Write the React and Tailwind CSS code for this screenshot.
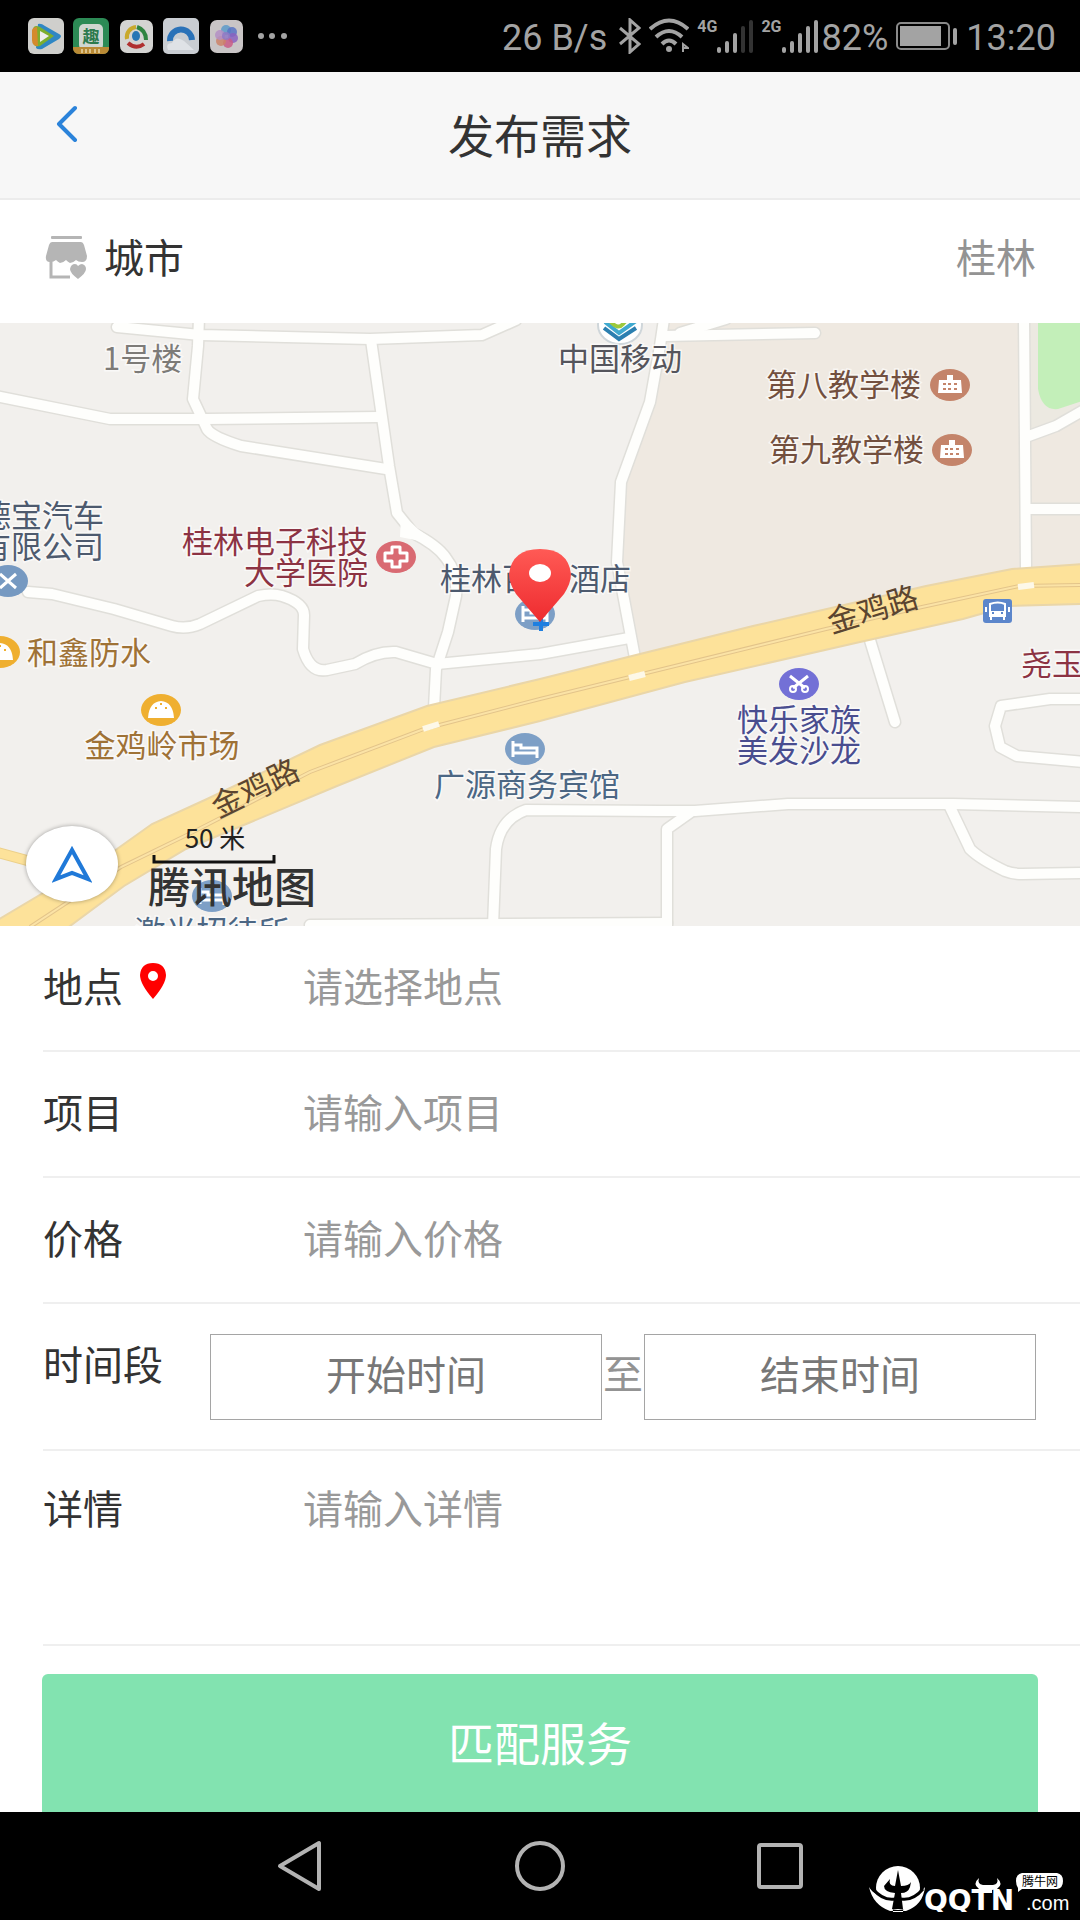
const ROADS = [
  'M117 4 L200 12 L370 16 L482 12 L516 -3',
  'M199 -6 L198 23 L193 76 L207 106 Q212 114 241 123 L386 146',
  'M-4 73 L110 96 L206 96 L379 94',
  'M371 17 L389 143 L397 190 L413 210 Q437 222 446 235 Q458 250 456 273 L448 309 L436 346 L434 385',
  'M28 269 L52 271 L114 286 L172 303 Q186 307 200 301 L258 273 Q272 270 282 273 Q304 280 304 292 L303 326 Q310 350 327 347 L355 341 Q376 328 396 329 L437 341 L540 331 L629 315',
  'M664 -4 L660 23 L650 79 L621 159 L617 239 L635 335',
  'M664 13 L815 10',
  'M680 10 L726 -4',
  'M1024 -4 L1026 246',
  'M1026 114 L1056 103 L1084 87',
  'M1026 186 L1084 186',
  'M493 603 L496 526 Q500 496 526 487 L660 488 L695 488 L788 481 L953 481 L1084 484',
  'M691 489 L667 506 L667 606',
  'M310 602 L667 600',
  'M950 484 L970 526 Q980 536 1005 548 Q1012 551 1022 551 L1084 550',
  'M869 314 L895 399',
  'M1084 376 L1050 376 L1001 383 L995 403 L1000 424 L1017 433 L1084 439',
]

const HIGHWAY =
  'M-4 598 L117 526 L152 501 L207 476 L320 422 L427 383 L540 356 L640 331 L753 303 L926 263 L1012 246 L1084 241 V281 L1009 283 L963 296 L860 319 L685 359 L540 398 L434 424 L337 463 L251 499 L186 526 L124 563 L66 606 L-4 606 Z'

const LABELS = [
  { text: '1号楼', x: 103, y: 47, color: '#7d7b78' },
  { text: '中国移动', x: 558, y: 47, color: '#55555c' },
  { text: '第八教学楼', x: 766, y: 73, color: '#73503f' },
  { text: '第九教学楼', x: 769, y: 138, color: '#73503f' },
  { text: '德宝汽车', x: 104, y: 204, color: '#4d5a6e', anchor: 'end' },
  { text: '有限公司', x: 104, y: 235, color: '#4d5a6e', anchor: 'end' },
  { text: '桂林电子科技', x: 368, y: 230, color: '#8c3343', anchor: 'end' },
  { text: '大学医院', x: 368, y: 261, color: '#8c3343', anchor: 'end' },
  { text: '桂林百', x: 440, y: 267, color: '#4d5a6e' },
  { text: '酒店', x: 631, y: 267, color: '#4d5a6e', anchor: 'end' },
  { text: '和鑫防水', x: 27, y: 341, color: '#9f7236' },
  { text: '金鸡岭市场', x: 162, y: 434, color: '#9f7236', anchor: 'middle' },
  { text: '快乐家族', x: 799, y: 408, color: '#494d8f', anchor: 'middle' },
  { text: '美发沙龙', x: 799, y: 439, color: '#494d8f', anchor: 'middle' },
  { text: '广源商务宾馆', x: 527, y: 473, color: '#4c6784', anchor: 'middle' },
  { text: '尧玉', x: 1021, y: 352, color: '#8c3343' },
  { text: '激光招待所', x: 212, y: 620, color: '#4c6784', anchor: 'middle' },
]

const BARS = [6, 12, 20, 27, 33]

function Signal({ label, level }) {
  return (
    <div className="flex items-start">
      <span className="text-base leading-4 font-bold">{label}</span>
      <svg width="36" height="34" viewBox="0 0 36 34" aria-hidden="true">
        {BARS.map((h, i) => (
          <rect key={h} x={i * 8} y={34 - h} width="4" height={h} rx="2" fill={i < level ? '#a3a3a3' : '#333'} />
        ))}
      </svg>
    </div>
  )
}

/* notification icons on the left of the status bar */
function AppIcons() {
  return (
    <svg width="262" height="36" viewBox="28 18 262 36" aria-hidden="true">
      {/* video */}
      <rect x="28" y="18" width="36" height="36" rx="6" fill="#cfcfcc" />
      <path d="M38 24 Q41 23 45 26 L59 34 Q63 36 59 39 L42 49 Q38 50 36 48 Z" fill="#2f87c4" />
      <path d="M33 29 Q34 24 40 27 L54 36 L40 46 Q33 48 33 41 Z" fill="#7dae2e" />
      <path d="M32 30 Q33 27 37 27 L38 46 Q32 46 32 40 Z" fill="#d58a2c" />
      <path d="M40 31 L49 36 L40 42 Z" fill="#eee" />
      {/* qu */}
      <rect x="73" y="18" width="36" height="36" rx="6" fill="#2c8a55" />
      <rect x="79" y="24" width="24" height="26" rx="5" fill="#cfd6d0" />
      <text x="91" y="43" textAnchor="middle" fontSize="17" fontWeight="700" fill="#2c7a4d">趣</text>
      <path d="M73 47 H109 V49 Q108 54 103 54 H79 Q74 54 73 49 Z" fill="#b98a35" />
      <path d="M82 49 v4 M86 49 v4 M90 49 v4 M95 49 v4 M99 49 v4" stroke="#dcc38b" strokeWidth="2" />
      {/* swirl */}
      <rect x="120" y="20" width="33" height="33" rx="7" fill="#d4d4d2" />
      <path d="M127 39 A10 10 0 0 1 136 27" fill="none" stroke="#c9a92c" strokeWidth="4" />
      <path d="M137 27 Q146 30 146 40" fill="none" stroke="#2f8440" strokeWidth="4" />
      <path d="M128 43 Q136 50 144 44" fill="none" stroke="#b03030" strokeWidth="4" />
      <ellipse cx="136" cy="36" rx="4" ry="5" fill="#2776b5" />
      {/* browser */}
      <rect x="163" y="18" width="36" height="36" rx="5" fill="#c9cdd2" />
      <path d="M170 41 A11 11 0 1 1 192 40" fill="none" stroke="#2a72b8" strokeWidth="6" />
      <path d="M168 50 Q165 43 172 43 Q176 35 184 41 L194 50 Z" fill="#dfe2e6" />
      {/* gallery */}
      <rect x="210" y="20" width="33" height="33" rx="7" fill="#c9c5c6" />
      <g fillOpacity="0.85">
        <circle cx="226" cy="30" r="5" fill="#5d9ac9" />
        <circle cx="232" cy="32" r="5" fill="#5873c4" />
        <circle cx="233" cy="38" r="5" fill="#8a62c0" />
        <circle cx="228" cy="43" r="5" fill="#c95c86" />
        <circle cx="221" cy="41" r="5" fill="#cc8268" />
        <circle cx="220" cy="35" r="5" fill="#b48fc4" />
        <circle cx="226" cy="36" r="4" fill="#8f79c4" />
      </g>
      <circle cx="261" cy="36" r="3" fill="#a3a3a3" />
      <circle cx="272" cy="36" r="3" fill="#a3a3a3" />
      <circle cx="284" cy="36" r="3" fill="#a3a3a3" />
    </svg>
  )
}

function StatusBar() {
  return (
    <div className="flex h-[72px] items-center justify-between bg-black pr-6 pl-7 font-['Roboto','Noto_Sans_CJK_SC',sans-serif] text-[36px] text-[#a3a3a3]">
      <AppIcons />
      <div className="flex items-center">
        <span className="pt-1">26 B/s</span>
        <svg className="ml-3" width="22" height="36" viewBox="0 0 22 36" fill="none" stroke="#a3a3a3" strokeWidth="3" aria-hidden="true">
          <path d="M1 10 L20 26 L11 34 V2 L20 10 L1 26" />
        </svg>
        <svg className="ml-2" width="40" height="36" viewBox="0 0 40 36" fill="none" stroke="#a3a3a3" strokeWidth="4" aria-hidden="true">
          <path d="M1 11 Q20 -6 39 11" />
          <path d="M7 19 Q20 7 33 19" />
          <path d="M13 26 Q20 19 27 26" />
          <circle cx="20" cy="31" r="3" fill="#a3a3a3" stroke="none" />
          <path d="M34 34 V26 L39 30 H34" strokeWidth="2" />
        </svg>
        <div className="ml-2 flex gap-2">
          <Signal label="4G" level={3} />
          <Signal label="2G" level={5} />
        </div>
        <span className="ml-1 pt-1">82%</span>
        <svg className="ml-2" width="62" height="28" viewBox="0 0 62 28" aria-hidden="true">
          <rect x="1" y="1" width="52" height="26" rx="4" fill="none" stroke="#8a8a8a" strokeWidth="2" />
          <rect x="4" y="4" width="41" height="20" fill="#a3a3a3" />
          <rect x="57" y="6" width="4" height="17" rx="2" fill="#a3a3a3" />
        </svg>
        <span className="ml-2 pt-1">13:20</span>
      </div>
    </div>
  )
}

function Header() {
  return (
    <header className="grid h-32 grid-cols-3 border-b-2 border-[#ececec] bg-[#f7f7f7]">
      <button type="button" aria-label="返回" className="flex w-24 items-start pt-8 pl-14">
        <svg width="22" height="38" viewBox="0 0 22 38" fill="none" stroke="#2b83da" strokeWidth="4" strokeLinecap="round" strokeLinejoin="round">
          <path d="M19 4 L3 20 L19 36" />
        </svg>
      </button>
      <h1 className="self-center pb-1 text-center text-[46px] leading-none">发布需求</h1>
    </header>
  )
}

function CityRow() {
  return (
    <div className="flex h-[123px] items-center px-11 pb-2">
      <svg width="44" height="44" viewBox="0 0 44 44" fill="#b5b5b5" aria-hidden="true">
        <rect x="7" y="0" width="31" height="3" rx="1" />
        <path d="M8 6 H37 Q39 6 40 9 L43 20 Q43 26 38 26 Q34 26 32 24 Q29 27 26 27 Q24 26 22 24 Q19 27 16 27 Q14 26 12 24 Q10 26 6 26 Q1 26 2 20 L5 9 Q6 6 8 6 Z" />
        <path d="M7 24 V41 H26" fill="none" stroke="#b5b5b5" strokeWidth="3" />
        <path d="M34 43 Q26 37 26 33 Q27 28 31 28 Q33 28 34 30 Q36 28 38 28 Q42 29 42 33 Q42 37 34 43 Z" />
      </svg>
      <span className="ml-4 pb-1 text-[40px] leading-none">城市</span>
      <span className="ml-auto pb-1 text-[40px] leading-none text-[#939393]">桂林</span>
    </div>
  )
}

function Poi({ x, y, fill, children }) {
  return (
    <g transform={`translate(${x} ${y})`} stroke="#fff" strokeWidth="2" fill="none">
      <ellipse rx="20" ry="16" fill={fill} stroke="none" />
      {children}
    </g>
  )
}

const bed = <path d="M-12 -8 V8 M-12 4 H12 M12 9 V-1 H-4 V-4 H-12" strokeWidth="3" />
const building = (
  <>
    <path d="M-12 8 L-11 -5 H-3 V-10 H3 V-5 H11 L12 8 Z" fill="#fff" stroke="none" />
    <path d="M-7 -1 h3 M-2 -1 h3 M4 -1 h3 M-7 4 h3 M-2 4 h3 M4 4 h3" stroke="#c4846a" />
  </>
)
const dumpling = (
  <>
    <path d="M-13 8 Q-12 -8 0 -9 Q12 -8 13 8 Z" fill="#fff" stroke="none" />
    <path d="M-6 -2 h2 M-1 -6 h2 M4 -2 h2" stroke="#efaf30" />
  </>
)
const scissors = (
  <>
    <path d="M-9 -8 L6 4 M9 -8 L-6 4" strokeWidth="3" />
    <circle cx="-6" cy="5" r="3" />
    <circle cx="6" cy="5" r="3" />
  </>
)

function CityMap() {
  return (
    <div className="relative overflow-hidden">
      <svg
        className="block h-[603px] w-full"
        viewBox="0 0 1080 603"
        preserveAspectRatio="xMidYMid slice"
        role="img"
        aria-label="腾讯地图"
      >
        <defs>
          <linearGradient id="pin" x1="0" y1="0" x2="0" y2="1">
            <stop offset="0" stopColor="#ff5a55" />
            <stop offset="1" stopColor="#ee2b2f" />
          </linearGradient>
        </defs>
        <rect width="1080" height="603" fill="#f2f0ed" />
        <path d="M664 0 L660 23 L650 79 L621 159 L617 239 L635 335 L1080 250 V0 Z" fill="#efe9e1" />
        <path d="M1026 0 V110 L1080 88 V0 Z" fill="#ece9e1" />
        <path d="M1038 -2 V66 Q1042 88 1058 86 L1082 78 V-2 Z" fill="#c3efb9" />

        <g fill="none" strokeLinecap="round" strokeLinejoin="round">
          {ROADS.map(d => <path key={d} d={d} stroke="#e0dfda" strokeWidth="13" />)}
          {ROADS.map(d => <path key={d} d={d} stroke="#fefefc" strokeWidth="10" />)}
        </g>
        <path d="M401 190 L418 206 L440 222 L400 214 Z" fill="#fefefc" />

        {/* main road */}
        <path d="M-4 529 L40 541" stroke="#ecd08a" strokeWidth="11" />
        <path d="M-4 529 L40 541" stroke="#fde29a" strokeWidth="9" />
        <path d={HIGHWAY} fill="#fde29a" stroke="#ead6a8" strokeWidth="2" />
        <path
          d="M30 604 L121 544 L193 509 L310 449 L424 406 L540 376 L630 354 L826 306 L922 284 L1019 263 L1084 262"
          fill="none" stroke="#e3c48a" strokeWidth="4"
        />
        <path
          d="M30 604 L121 544 L193 509 L310 449 L424 406 L540 376 L630 354 L826 306 L922 284 L1019 263 L1084 262"
          fill="none" stroke="#fbe3a6" strokeWidth="2"
        />
        <path d="M423 406 L439 401 M629 355 L645 351 M1018 264 L1034 262" stroke="#fdf8e8" strokeWidth="6" />

        <Poi x={950} y={62} fill="#c4846a">{building}</Poi>
        <Poi x={952} y={127} fill="#c4846a">{building}</Poi>
        <Poi x={8} y={258} fill="#7699c1">
          <path d="M-8 -7 L8 7 M8 -7 L-8 7" strokeWidth="3" />
        </Poi>
        <Poi x={396} y={234} fill="#d96a72">
          <path d="M-4 -4 V-10 H4 V-4 H11 V4 H4 V10 H-4 V4 H-11 V-4 Z" strokeWidth="3" strokeLinejoin="round" />
        </Poi>
        <Poi x={0} y={329} fill="#efaf30">{dumpling}</Poi>
        <Poi x={161} y={387} fill="#efaf30">{dumpling}</Poi>
        <Poi x={799} y={361} fill="#7370d6">{scissors}</Poi>
        <Poi x={525} y={426} fill="#7d9fc6">{bed}</Poi>
        <Poi x={535} y={291} fill="#7d9fc6">{bed}</Poi>
        <Poi x={212} y={573} fill="#7d9fc6">{bed}</Poi>

        {/* carrier logo */}
        <ellipse cx="620" cy="2" rx="22" ry="19" fill="#fff" stroke="#cfd6da" strokeWidth="2" />
        <g fill="none" strokeWidth="4">
          <path d="M604 5 L619 16 L636 5" stroke="#2b7fb0" />
          <path d="M605 -1 L619 10 L636 -2" stroke="#3fa9cf" />
          <path d="M611 -1 Q618 7 623 1 Q626 -4 633 -3" stroke="#9cc93c" />
        </g>

        {/* bus stop */}
        <rect x="983" y="276" width="29" height="24" rx="3" fill="#5c86cb" />
        <path d="M990 281 Q998 278 1005 281 V293 H990 Z M991 293 V297 M1004 293 V297 M986 284 V289 M1009 284 V289" fill="none" stroke="#fff" strokeWidth="2" />
        <path d="M990 288 H1005 V293 H990 Z" fill="#fff" />
        <path d="M992 290 h2 M1001 290 h2" stroke="#5c86cb" strokeWidth="2" />

        <g fontSize="31">
          {LABELS.map(l => (
            <text
              key={l.text}
              x={l.x}
              y={l.y}
              fill={l.color}
              textAnchor={l.anchor || 'start'}
              stroke="#fff"
              strokeWidth="3"
              strokeOpacity="0.6"
              paintOrder="stroke"
            >
              {l.text}
            </text>
          ))}
          <text transform="translate(260 475) rotate(-26)" textAnchor="middle" fill="#5b4530">金鸡路</text>
          <text transform="translate(876 297) rotate(-17)" textAnchor="middle" fill="#5b4530">金鸡路</text>
        </g>

        {/* scale and attribution */}
        <text x="215" y="525" textAnchor="middle" fontSize="26" fill="#222">50 米</text>
        <path d="M154 532 V539 H274 V532" fill="none" stroke="#111" strokeWidth="3" />
        <text x="232" y="580" textAnchor="middle" fontSize="42" fontWeight="500" fill="#333">腾讯地图</text>

        {/* selected place */}
        <path d="M541 294 V308 M533 301 H549" stroke="#1f7fe0" strokeWidth="4" />
        <path d="M540 299 L516 271 Q509 260 509 251 Q512 226 540 226 Q568 226 571 251 Q571 260 564 271 Z" fill="url(#pin)" />
        <ellipse cx="540" cy="250" rx="11" ry="9" fill="#fff" />
      </svg>

      <button
        type="button"
        aria-label="定位"
        className="absolute bottom-6 left-[26px] flex h-[76px] w-[92px] items-center justify-center rounded-[50%] bg-white shadow-[0_0_4px_rgba(0,0,0,0.35)]"
      >
        <svg width="40" height="38" viewBox="0 0 40 38" fill="none" stroke="#2079d8" strokeWidth="4">
          <path d="M20 5 L4 34 L20 28 L36 34 Z" />
        </svg>
      </button>
    </div>
  )
}

function Field({ id, label, icon, placeholder }) {
  return (
    <div className="flex h-[126px] items-center border-b-2 border-[#efefef] pb-1.5">
      <label htmlFor={id} className="flex w-[260px] items-center gap-4 text-[40px] leading-none">
        {label}
        {icon}
      </label>
      <input
        id={id}
        type="text"
        placeholder={placeholder}
        className="h-full min-w-0 flex-1 text-[40px] outline-none placeholder:text-[#999]"
      />
    </div>
  )
}

const placeIcon = (
  <svg className="mb-2" width="28" height="38" viewBox="0 0 28 38" aria-hidden="true">
    <path d="M14 37 Q1 22 1 13 Q2 1 14 1 Q26 1 27 13 Q27 22 14 37 Z M14 9 a5 5 0 1 0 0 10 a5 5 0 1 0 0 -10 Z" fill="#f00" fillRule="evenodd" />
  </svg>
)

function RequestForm() {
  return (
    <form className="flex flex-1 flex-col" onSubmit={e => e.preventDefault()}>
      <div className="ml-[43px]">
        <Field id="place" label="地点" placeholder="请选择地点" icon={placeIcon} />
        <Field id="project" label="项目" placeholder="请输入项目" />
        <Field id="price" label="价格" placeholder="请输入价格" />

        <div className="flex h-[147px] items-center border-b-2 border-[#efefef] pr-11">
          <label htmlFor="start" className="w-[167px] shrink-0 pb-7 text-[40px] leading-none">时间段</label>
          <input
            id="start"
            type="text"
            placeholder="开始时间"
            className="h-[86px] min-w-0 flex-1 border border-[#a5a5a5] pb-2 text-center text-[40px] outline-none placeholder:text-[#777]"
          />
          <label htmlFor="end" className="px-px pb-2.5 text-[40px] leading-none text-[#939393]">至</label>
          <input
            id="end"
            type="text"
            placeholder="结束时间"
            className="h-[86px] min-w-0 flex-1 border border-[#a5a5a5] pb-2 text-center text-[40px] outline-none placeholder:text-[#777]"
          />
        </div>

        <div className="flex h-[195px] items-start border-b-2 border-[#efefef] pt-9">
          <label htmlFor="detail" className="w-[260px] text-[40px] leading-10">详情</label>
          <textarea
            id="detail"
            placeholder="请输入详情"
            className="h-32 min-w-0 flex-1 resize-none text-[40px] leading-10 outline-none placeholder:text-[#999]"
          />
        </div>
      </div>

      <button type="submit" className="mx-[42px] mt-7 h-[138px] rounded-t-md bg-[#82e3b0] pb-1 text-[46px] leading-none text-white">
        匹配服务
      </button>
    </form>
  )
}

function Watermark() {
  return (
    <svg className="absolute right-2 bottom-2 h-[50px] w-[204px]" viewBox="868 1862 204 50" role="img" aria-label="QQTN.com">
      <circle cx="898" cy="1888" r="22" fill="#fff" />
      <path d="M869 1887 Q874 1896 892 1899 L893 1912 H903 L904 1899 Q920 1896 925 1887 Q923 1905 906 1911 H890 Q873 1905 869 1887 Z" fill="#fff" />
      <path d="M898 1870 L901 1886 Q909 1886 911 1882 L910 1887 Q908 1893 901 1893 L903 1909 H892 L895 1893 Q884 1892 884 1886 L890 1879 Q888 1886 895 1886 Z" fill="#000" />
      <path d="M873 1889 Q883 1901 895 1899 M923 1889 Q913 1901 901 1899" fill="none" stroke="#000" strokeWidth="3" />
      <text x="924" y="1910" fontSize="28" fontWeight="700" fill="#fff" fontFamily="DejaVu Sans, sans-serif">QQTN</text>
      <path d="M979 1878 Q972 1884 979 1889 L984 1890 V1893 H992 V1890 L997 1889 Q1004 1884 997 1878 Q999 1884 993 1885 H983 Q977 1884 979 1878 Z" fill="#fff" />
      <text x="1026" y="1910" fontSize="20" fill="#fff" fontFamily="Liberation Sans, sans-serif">.com</text>
      <path d="M1022 1873 H1057 Q1063 1874 1063 1881 Q1063 1888 1057 1889 H1022 L1018 1892 L1018 1888 Q1016 1885 1016 1881 Q1016 1874 1022 1873 Z" fill="#fff" />
      <text x="1040" y="1886" fontSize="12" textAnchor="middle" fill="#000">腾牛网</text>
    </svg>
  )
}

function NavBar() {
  return (
    <nav className="relative flex h-[108px] items-center justify-center gap-[188px] bg-black">
      <button type="button" aria-label="返回">
        <svg width="52" height="52" viewBox="0 0 52 52" fill="none" stroke="#b3b3b3" strokeWidth="4" strokeLinejoin="round">
          <path d="M45 3 V49 L6 26 Z" />
        </svg>
      </button>
      <button type="button" aria-label="主页">
        <svg width="52" height="52" viewBox="0 0 52 52" fill="none" stroke="#b3b3b3" strokeWidth="4">
          <circle cx="26" cy="26" r="23" />
        </svg>
      </button>
      <button type="button" aria-label="最近任务">
        <svg width="52" height="52" viewBox="0 0 52 52" fill="none" stroke="#b3b3b3" strokeWidth="4">
          <rect x="5" y="5" width="42" height="42" rx="2" />
        </svg>
      </button>
      <Watermark />
    </nav>
  )
}

export default function App() {
  return (
    <div className="flex min-h-screen flex-col bg-white font-['Noto_Sans_CJK_SC',sans-serif] text-[#333]">
      <StatusBar />
      <Header />
      <CityRow />
      <CityMap />
      <RequestForm />
      <NavBar />
    </div>
  )
}
